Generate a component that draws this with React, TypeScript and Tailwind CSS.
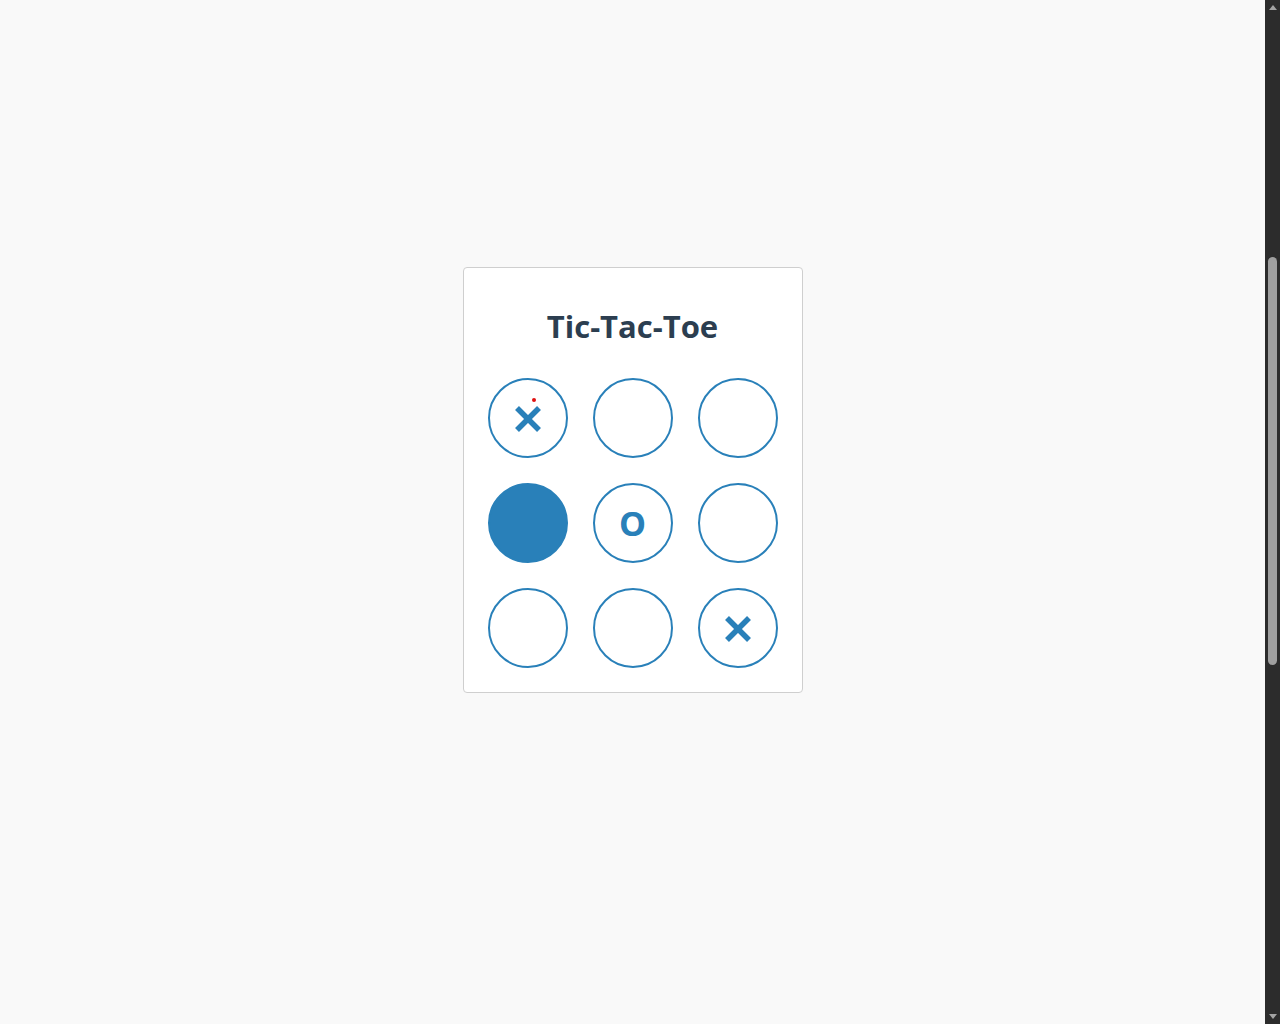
import React from "react";

type Cell = "X" | "O" | "F" | "";

const cells: Cell[] = ["X", "", "", "F", "O", "", "", "", "X"];

function XMark() {
  return (
    <svg width="26" height="26" viewBox="0 0 26 26" aria-label="X" className="mt-[2px]">
      <line x1="2" y1="2" x2="24" y2="24" stroke="#2980b9" strokeWidth="5.5" />
      <line x1="24" y1="2" x2="2" y2="24" stroke="#2980b9" strokeWidth="5.5" />
    </svg>
  );
}

function Scrollbar() {
  return (
    <div className="w-[15px] h-screen bg-[#2c2c2c] flex flex-col items-center shrink-0">
      <div className="h-[15px] flex items-center justify-center">
        <div className="w-0 h-0 border-l-[4px] border-r-[4px] border-b-[5px] border-l-transparent border-r-transparent border-b-[#a3a3a3]" />
      </div>
      <div className="h-[242px]" />
      <div className="w-[9px] h-[408px] rounded-full bg-[#9f9f9f]" />
      <div className="flex-1" />
      <div className="h-[15px] flex items-center justify-center">
        <div className="w-0 h-0 border-l-[4px] border-r-[4px] border-t-[5px] border-l-transparent border-r-transparent border-t-[#a3a3a3]" />
      </div>
    </div>
  );
}

export default function App() {
  return (
    <div
      className="h-screen flex bg-[#f9f9f9] overflow-hidden"
      style={{ fontFamily: '"Open Sans", "Noto Sans", sans-serif' }}
    >
      <main className="flex-1 flex justify-center items-start pt-[267px]">
        <div className="w-[340px] bg-white border border-[#cfcfcf] rounded-[4px] px-[24px] pt-[38px] pb-[24px] flex flex-col items-center">
          <h1 className="text-[31px] leading-[40px] font-bold text-[#2c3e50] mb-[32px]">
            Tic-Tac-Toe
          </h1>
          <div className="grid grid-cols-3 gap-[25px]">
            {cells.map((c, i) => (
              <div
                key={i}
                className={
                  c === "F"
                    ? "relative w-[80px] h-[80px] rounded-full bg-[#2980b9] border-2 border-[#2980b9]"
                    : "relative w-[80px] h-[80px] rounded-full bg-white border-2 border-[#2980b9] flex items-center justify-center"
                }
              >
                {c === "X" && <XMark />}
                {c === "O" && (
                  <span className="text-[34px] leading-none font-bold text-[#2980b9]">O</span>
                )}
                {i === 0 && (
                  <span className="absolute left-[42px] top-[18px] w-[4px] h-[4px] rounded-full bg-[#e01010]" />
                )}
              </div>
            ))}
          </div>
        </div>
      </main>
      <Scrollbar />
    </div>
  );
}
